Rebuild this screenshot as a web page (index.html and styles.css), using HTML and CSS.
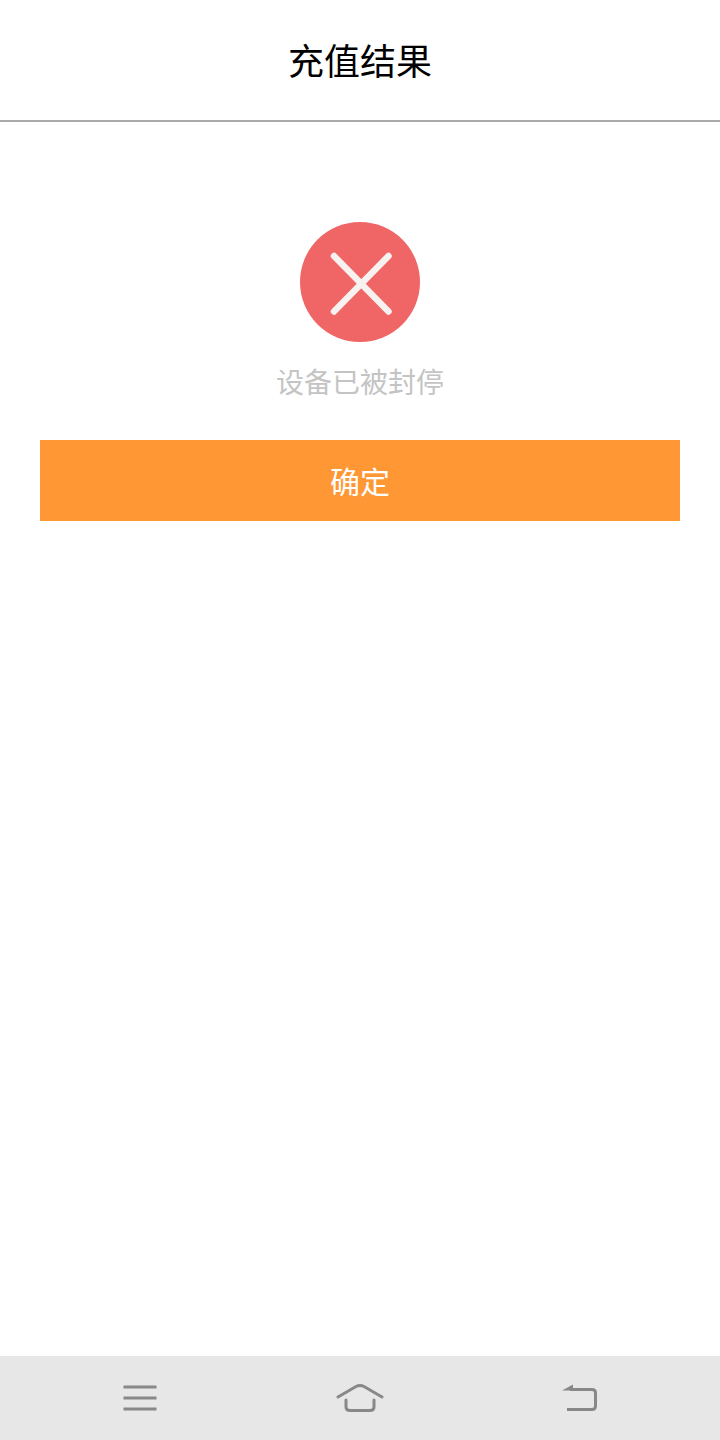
FILE: index.html
```html
<!DOCTYPE html>
<html lang="zh-CN">
<head>
  <meta charset="UTF-8">
  <title>充值结果</title>
  <meta name="viewport" content="width=device-width, initial-scale=1">
  <link rel="stylesheet" href="styles.css">
</head>
<body>

  <div class="page">
    <header class="title-bar">
      <h1 class="title">充值结果</h1>
    </header>

    <main class="result">
      <svg class="result-icon" width="120" height="120" viewBox="0 0 120 120">
        <circle cx="60" cy="60" r="60" fill="#f06666"/>
        <path d="M34 34L88.500 89.500M88.500 34L34 89.500" fill="none" stroke="#f7f1f0" stroke-width="6.500" stroke-linecap="round"/>
      </svg>
      <p class="result-text">设备已被封停</p>
      <button type="button" class="confirm">确定</button>
    </main>

    <nav class="nav-bar">
      <div class="nav-item">
        <svg width="34" height="26" viewBox="0 0 34 26">
          <path d="M0.500 2H33.500M0.500 13H33.500M0.500 24H33.500" fill="none" stroke="#888" stroke-width="3"/>
        </svg>
      </div>
      <div class="nav-item">
        <svg width="48" height="30" viewBox="0 0 48 30">
          <path d="M2 14L20 3.500Q24 1.500 28 3.500L46 14" fill="none" stroke="#888" stroke-width="3" stroke-linecap="round"/>
          <path d="M10 17V24Q10 27.500 14 27.500H34Q38 27.500 38 24V17" fill="none" stroke="#888" stroke-width="3" stroke-linecap="round"/>
        </svg>
      </div>
      <div class="nav-item">
        <svg width="36" height="28" viewBox="0 0 36 28">
          <path d="M0 6.500L11 0.500V6.500Z" fill="#888"/>
          <path d="M8 5.500H30Q33.500 5.500 33.500 9V22Q33.500 25.500 30 25.500H5" fill="none" stroke="#888" stroke-width="3"/>
        </svg>
      </div>
    </nav>
  </div>

</body>
</html>
```

FILE: styles.css
```css
* {
  box-sizing: border-box;
}
body {
  margin: 0;
  background-color: #fff;
  font-family: "Noto Sans CJK SC", "Liberation Sans", sans-serif;
}
.page {
  height: 1440px;
  display: flex;
  flex-direction: column;
}
.title-bar {
  height: 122px;
  flex-shrink: 0;
  display: flex;
  align-items: center;
  justify-content: center;
  padding-bottom: 2px;
  border-bottom: 2px solid #aaa;
}
.title {
  margin: 0;
  font-size: 36px;
  font-weight: 400;
  color: #000;
}
.result {
  flex: 1;
  display: flex;
  flex-direction: column;
  align-items: center;
  padding: 100px 40px 0;
}
.result-icon {
  display: block;
}
.result-text {
  margin: 17px 0 0;
  height: 44px;
  line-height: 44px;
  font-size: 28px;
  color: #c4c4c4;
}
.confirm {
  width: 100%;
  height: 81px;
  margin-top: 37px;
  padding: 0 0 2px;
  border: none;
  border-radius: 0;
  background-color: #ff9734;
  color: #fff;
  font-family: inherit;
  font-size: 30px;
}
.nav-bar {
  height: 84px;
  flex-shrink: 0;
  display: grid;
  grid-template-columns: repeat(3, 1fr);
  padding: 0 30px;
  background-color: #e7e7e7;
}
.nav-item {
  display: flex;
  align-items: center;
  justify-content: center;
}
```
